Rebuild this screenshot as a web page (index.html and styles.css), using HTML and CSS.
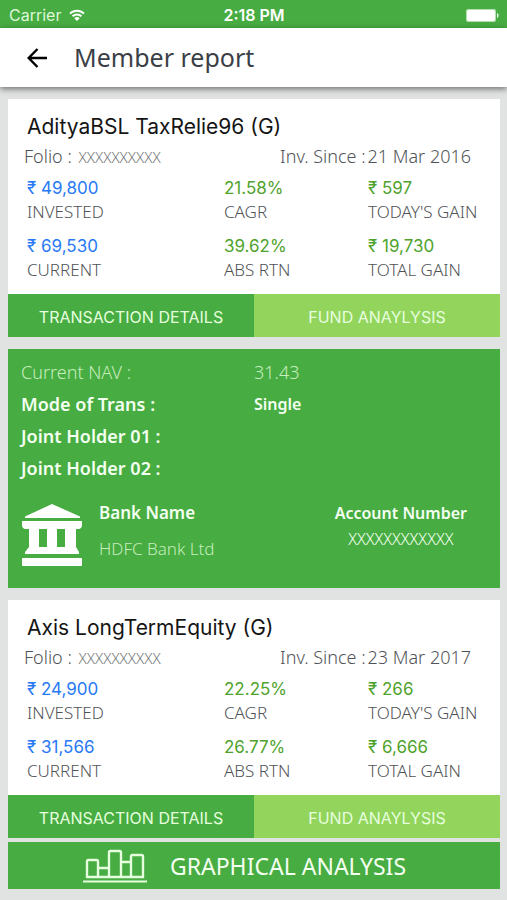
FILE: index.html
```html
<!DOCTYPE html>
<html lang="en">
<head>
    <meta charset="UTF-8">
    <meta name="viewport" content="width=device-width, initial-scale=1">
    <title>Member report</title>
    <link rel="stylesheet" href="styles.css">
</head>
<body>
    <div class="status-bar">
        <div class="carrier">
            <span>Carrier</span>
            <svg width="16" height="12" viewBox="0 0 16 12" fill="none" stroke="#fff" stroke-width="2">
                <path d="M1 4.600a10 10 0 0 1 14 0M3.600 7.300a6.300 6.300 0 0 1 8.800 0"/>
                <path d="M8 12L5.300 9.200a3.900 3.900 0 0 1 5.400 0z" fill="#fff" stroke="none"/>
            </svg>
        </div>
        <span class="time">2:18 PM</span>
        <svg class="battery" width="33" height="13" viewBox="0 0 33 13" fill="#fff">
            <rect x="0" y="0" width="30" height="13" rx="2" opacity="0.6"/>
            <rect x="1" y="1" width="28" height="11" rx="2"/>
            <path d="M31 4c2 .8 2 4.200 0 5z"/>
        </svg>
    </div>

    <header class="header">
        <button type="button" class="back" aria-label="Back">
            <svg width="20" height="20" viewBox="0 0 20 20" fill="none" stroke="#000" stroke-width="2.400">
                <path d="M20 10H2M10.500 1L1.700 10l8.800 9"/>
            </svg>
        </button>
        <h1>Member report</h1>
    </header>

    <main>
        <section class="card">
            <h2>AdityaBSL TaxRelie96 (G)</h2>
            <div class="folio-row">
                <p>Folio : <span class="masked">XXXXXXXXXX</span></p>
                <p>Inv. Since :<span class="date">21 Mar 2016</span></p>
            </div>
            <div class="stats">
                <div class="stat invested"><strong>₹ 49,800</strong><span>INVESTED</span></div>
                <div class="stat"><strong>21.58%</strong><span>CAGR</span></div>
                <div class="stat"><strong>₹ 597</strong><span>TODAY'S GAIN</span></div>
                <div class="stat invested"><strong>₹ 69,530</strong><span>CURRENT</span></div>
                <div class="stat"><strong>39.62%</strong><span>ABS RTN</span></div>
                <div class="stat"><strong>₹ 19,730</strong><span>TOTAL GAIN</span></div>
            </div>
            <div class="buttons">
                <button type="button" class="btn-details">TRANSACTION DETAILS</button>
                <button type="button" class="btn-analysis">FUND ANAYLYSIS</button>
            </div>
        </section>

        <section class="details">
            <dl>
                <dt class="light">Current NAV :</dt><dd class="light">31.43</dd>
                <dt>Mode of Trans :</dt><dd class="mode">Single</dd>
                <dt>Joint Holder 01 :</dt><dd></dd>
                <dt>Joint Holder 02 :</dt><dd></dd>
            </dl>
            <div class="bank">
                <svg class="bank-icon" width="62" height="62" viewBox="0 0 62 62" fill="#fff">
                    <path d="M31 0L4 12.500V14h55v-1.500z"/>
                    <path d="M1 17h60v4q0 3-3 4h-3v18l3 5v2H4v-2l4-5V25H4q-3-1-3-4zM18 25v18h8V25zM36 25v18h8V25z" fill-rule="evenodd"/>
                    <rect x="1" y="54" width="60" height="8" rx="1"/>
                </svg>
                <div class="bank-name">
                    <h3>Bank Name</h3>
                    <p class="light">HDFC Bank Ltd</p>
                </div>
                <div class="account">
                    <h3>Account Number</h3>
                    <p>XXXXXXXXXXXX</p>
                </div>
            </div>
        </section>

        <section class="card">
            <h2>Axis LongTermEquity (G)</h2>
            <div class="folio-row">
                <p>Folio : <span class="masked">XXXXXXXXXX</span></p>
                <p>Inv. Since :<span class="date">23 Mar 2017</span></p>
            </div>
            <div class="stats">
                <div class="stat invested"><strong>₹ 24,900</strong><span>INVESTED</span></div>
                <div class="stat"><strong>22.25%</strong><span>CAGR</span></div>
                <div class="stat"><strong>₹ 266</strong><span>TODAY'S GAIN</span></div>
                <div class="stat invested"><strong>₹ 31,566</strong><span>CURRENT</span></div>
                <div class="stat"><strong>26.77%</strong><span>ABS RTN</span></div>
                <div class="stat"><strong>₹ 6,666</strong><span>TOTAL GAIN</span></div>
            </div>
            <div class="buttons">
                <button type="button" class="btn-details">TRANSACTION DETAILS</button>
                <button type="button" class="btn-analysis">FUND ANAYLYSIS</button>
            </div>
        </section>

        <button type="button" class="graph-button">
            <svg width="66" height="34" viewBox="0 0 66 34" fill="none" stroke="#e6ffdf" stroke-width="2.400">
                <path d="M5 12.500q0-1.500 1.500-1.500h8q1.500 0 1.500 1.500V28H5zM27 28V3.500Q27 2 28.500 2h9Q39 2 39 3.500V28zM49 28V7.500Q49 6 50.500 6h9Q61 6 61 7.500V28zM16 19h11M16 28h11M39 13h10M39 28h10"/>
                <path d="M1 32.500h64" stroke-width="1.800"/>
            </svg>
            <span>GRAPHICAL ANALYSIS</span>
        </button>
    </main>
</body>
</html>
```
FILE: styles.css
```css
* {
    box-sizing: border-box;
}

body {
    margin: 0;
    background-color: #e1e3e2;
    font-family: 'Noto Sans', sans-serif;
    color: #505356;
}

h1, h2, h3, p, dl, dd {
    margin: 0;
}

button {
    border: none;
    padding: 0;
    cursor: pointer;
}

svg {
    display: block;
}

.status-bar {
    display: grid;
    grid-template-columns: 1fr auto 1fr;
    align-items: center;
    height: 28px;
    padding: 2px 8px 0 9px;
    background-color: #47ac41;
    color: #fff;
    font-family: 'Inter', sans-serif;
    font-size: 16px;
}

.carrier {
    display: flex;
    align-items: center;
    gap: 8px;
    color: #dcf7d8;
}

.time {
    font-weight: 600;
}

.battery {
    justify-self: end;
}

.header {
    position: relative;
    display: flex;
    align-items: center;
    gap: 27px;
    height: 59px;
    padding-left: 27px;
    background-color: #fff;
    box-shadow: 0 2px 6px rgba(0, 0, 0, 0.5);
}

.back {
    background: none;
}

.header h1 {
    padding-bottom: 2px;
    color: #3a3f48;
    font-size: 25px;
    font-weight: 400;
}

main {
    padding: 12px 7px 11px 8px;
}

.card {
    padding-top: 16px;
    background-color: #fff;
}

.card h2 {
    padding-left: 19px;
    color: #151515;
    font-family: 'Inter', sans-serif;
    font-size: 21px;
    font-weight: 400;
    line-height: 24px;
}

.folio-row {
    display: flex;
    justify-content: space-between;
    padding: 5px 29px 8px 16px;
    font-size: 18px;
    font-weight: 300;
    line-height: 24px;
}

.masked {
    margin-left: 2px;
    color: #76797c;
    font-size: 15px;
    line-height: 1;
}

.date {
    margin-left: 2px;
}

.stats {
    display: grid;
    grid-template-columns: 197fr 144fr 132fr;
    row-gap: 10px;
    padding: 0 0 12px 19px;
}

.stat {
    display: flex;
    flex-direction: column;
    font-size: 17px;
    font-weight: 300;
    line-height: 24px;
}

.stat strong {
    color: #4fa32c;
    font-family: 'Inter', sans-serif;
    font-weight: 400;
}

.invested strong {
    color: #2879f5;
}

.buttons {
    display: grid;
    grid-template-columns: 1fr 1fr;
}

.buttons button {
    height: 43px;
    padding-top: 2px;
    color: #e6ffdf;
    font-family: 'Inter', sans-serif;
    font-size: 16px;
}

.btn-details {
    background-color: #47ac41;
}

.buttons .btn-analysis {
    background-color: #92d45c;
}

.details {
    margin: 12px 0;
    padding: 7px 13px 22px;
    background-color: #47ac41;
    color: #f3fff0;
    font-size: 18px;
    font-weight: 600;
}

.details dl {
    display: grid;
    grid-template-columns: 1fr 1fr;
    line-height: 32px;
}

.details .light {
    color: #c5edbd;
    font-weight: 300;
}

.details .mode {
    font-size: 16px;
}

.bank {
    display: flex;
    gap: 16px;
    padding-top: 20px;
}

.bank h3 {
    font-size: 17px;
    font-weight: 600;
    line-height: 18px;
}

.bank-name p {
    padding-top: 16px;
    font-size: 17px;
    line-height: 22px;
}

.account {
    margin: 0 20px 0 auto;
    text-align: center;
}

.bank .account h3 {
    font-size: 16px;
}

.account p {
    padding-top: 6px;
    font-size: 16px;
    font-weight: 300;
    line-height: 22px;
}

.graph-button {
    display: flex;
    align-items: center;
    justify-content: center;
    gap: 22px;
    width: 100%;
    height: 47px;
    margin-top: 4px;
    padding-right: 20px;
    background-color: #47ac41;
    color: #f3fff0;
    font-family: 'Noto Sans', sans-serif;
    font-size: 23px;
}
```
